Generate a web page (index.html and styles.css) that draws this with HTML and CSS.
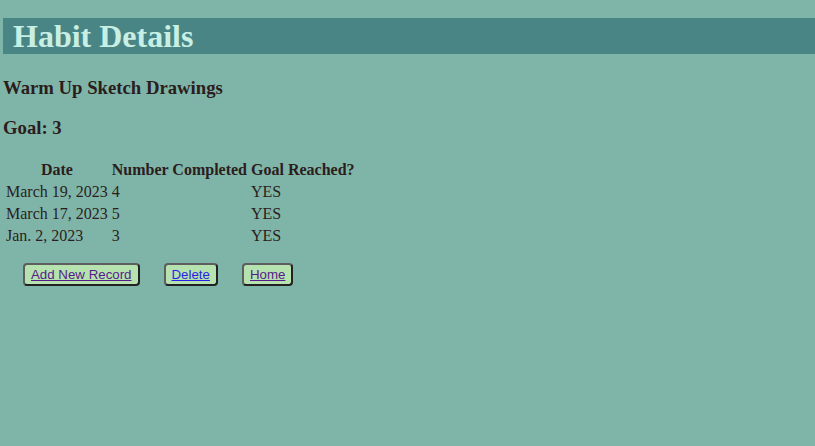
FILE: index.html
```html
<!DOCTYPE html>
<html>
<head>
<meta charset="utf-8">
<link rel="stylesheet" href="styles.css">
<title>Habit Details</title>
</head>
<body>
<h1 class="title">Habit Details</h1>
<h3 class="habit-name">Warm Up Sketch Drawings</h3>
<h3 class="goal">Goal: 3</h3>
<table class="records">
  <thead>
    <tr><th>Date</th><th>Number Completed</th><th>Goal Reached?</th></tr>
  </thead>
  <tbody>
    <tr><td>March 19, 2023</td><td>4</td><td>YES</td></tr>
    <tr><td>March 17, 2023</td><td>5</td><td>YES</td></tr>
    <tr><td>Jan. 2, 2023</td><td>3</td><td>YES</td></tr>
  </tbody>
</table>
<div class="actions">
  <span class="btn"><a class="visited" href="#">Add New Record</a></span>
  <span class="btn"><a class="link" href="#">Delete</a></span>
  <span class="btn"><a class="visited" href="#">Home</a></span>
</div>
</body>
</html>
```
FILE: styles.css
```css
html, body {
  background: #7fb5a8;
}
body {
  margin: 0;
  padding: 18px 0 0 3px;
  font-family: "Liberation Serif", "Times New Roman", serif;
  color: #2b1d1d;
}
.title {
  margin: 0;
  background: #4a8585;
  color: #c8efe4;
  font-size: 32px;
  padding: 0 0 0 10px;
  height: 36px;
  line-height: 37px;
}
.habit-name, .goal {
  font-size: 18.72px;
  margin: 18.72px 0;
}
.habit-name {
  margin-top: 22.72px;
}
.records {
  border-spacing: 2px;
  font-size: 16px;
}
.records th, .records td {
  padding: 1px;
  text-align: left;
}
.records th {
  text-align: center;
}
.actions {
  display: flex;
  gap: 24px;
  padding: 15px 0 0 20px;
}
.btn {
  display: inline-block;
  background: #b6e2b0;
  border: 2px solid #5e5e5e;
  border-right-color: #222;
  border-bottom-color: #222;
  border-radius: 4px;
  padding: 0 6px;
  font-family: "Liberation Sans", Arial, sans-serif;
  font-size: 13.3px;
  line-height: 19px;
}
.btn a { text-decoration: underline; }
.btn a.visited { color: #551a8b; }
.btn a.link { color: #2a1fe8; }
```
